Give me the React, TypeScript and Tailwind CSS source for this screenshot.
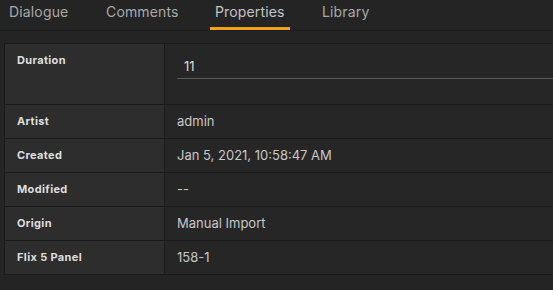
import React from 'react';

const tabs: { name: string; cls: string }[] = [
    { name: 'Dialogue', cls: 'w-[97px]' },
    { name: 'Comments', cls: 'w-[104px]' },
    { name: 'Properties', cls: 'w-[80px] pl-[5px] mr-[32px]' },
    { name: 'Library', cls: 'w-[60px]' },
];

const rows: { label: string; value: string }[] = [
    { label: 'Artist', value: 'admin' },
    { label: 'Created', value: 'Jan 5, 2021, 10:58:47 AM' },
    { label: 'Modified', value: '--' },
    { label: 'Origin', value: 'Manual Import' },
    { label: 'Flix 5 Panel', value: '158-1' },
];

const App: React.FC = () => {
    return (
        <div className="w-[553px] h-[290px] overflow-hidden bg-[#242424] font-['Inter',sans-serif]">
            <div className="flex h-[31px] border-b border-[#1b1b1b] pl-[9px]">
                {tabs.map((tab) => (
                    <div
                        key={tab.name}
                        className={`relative shrink-0 text-[14px] tracking-[0.15px] leading-[24px] ${tab.cls} ${
                            tab.name === 'Properties' ? 'text-[#c4c4c4]' : 'text-[#a9a9a9]'
                        }`}
                    >
                        {tab.name}
                        {tab.name === 'Properties' && (
                            <div className="absolute left-0 right-0 top-[27px] h-[3px] bg-[#f5a20a]" />
                        )}
                    </div>
                ))}
            </div>

            <div className="mt-[12px] ml-[4px] border-y border-l border-[#1b1b1b]">
                <div className="flex h-[61px] border-b border-[#1b1b1b]">
                    <div className="w-[160px] shrink-0 border-r border-[#1b1b1b] bg-[#2d2d2d] pl-[12px] pt-[8px] text-[11px] tracking-[0.35px] font-bold text-[#dedede]">
                        Duration
                    </div>
                    <div className="flex-1 bg-[#262626] pl-[12px] pt-[13px]">
                        <div className="border-b border-[#595959] pl-[7px] pb-[3px] text-[13px] leading-[18px] text-[#dcdcdc]">
                            11
                        </div>
                    </div>
                </div>
                {rows.map((row, i) => (
                    <div
                        key={row.label}
                        className={
                            i === rows.length - 1
                                ? 'flex h-[33px]'
                                : 'flex h-[34px] border-b border-[#1b1b1b]'
                        }
                    >
                        <div className="flex w-[160px] shrink-0 items-center border-r border-[#1b1b1b] bg-[#2d2d2d] pl-[12px] text-[11px] tracking-[0.35px] font-bold text-[#dedede]">
                            {row.label}
                        </div>
                        <div className="flex flex-1 items-center bg-[#262626] pl-[12px] text-[13px] text-[#c8c8c8]">
                            {row.value}
                        </div>
                    </div>
                ))}
            </div>
        </div>
    );
};

export default App;
